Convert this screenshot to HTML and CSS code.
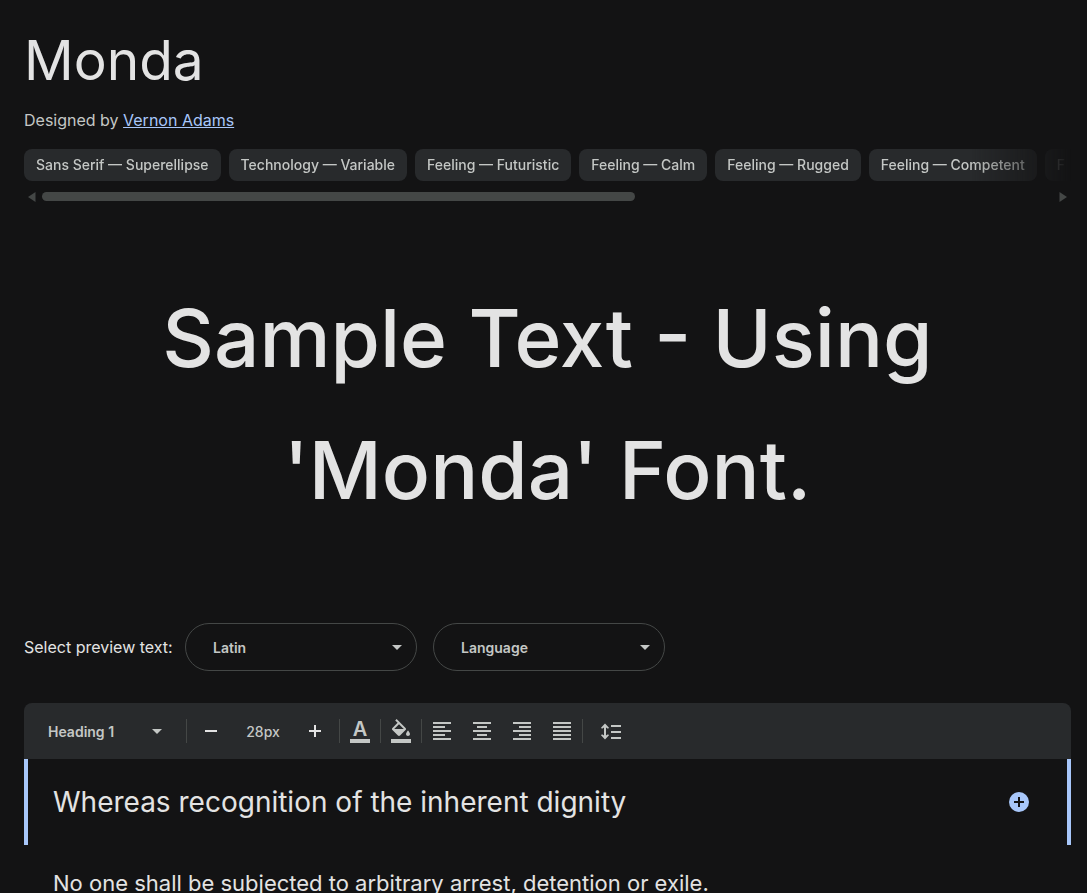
FILE: index.html
```html
<!DOCTYPE html>
<html lang="en">
<head>
  <meta charset="utf-8">
  <meta name="viewport" content="width=device-width, initial-scale=1">
  <title>Monda</title>
  <link rel="stylesheet" href="styles.css">
</head>
<body>
  <main class="page">
    <h1>Monda</h1>
    <p class="designer">Designed by <a href="#">Vernon Adams</a></p>

    <div class="tags">
      <a class="tag" href="#">Sans Serif — Superellipse</a>
      <a class="tag" href="#">Technology — Variable</a>
      <a class="tag" href="#">Feeling — Futuristic</a>
      <a class="tag" href="#">Feeling — Calm</a>
      <a class="tag" href="#">Feeling — Rugged</a>
      <a class="tag" href="#">Feeling — Competent</a>
      <a class="tag" href="#">F</a>
    </div>
    <div class="scrollbar">
      <svg class="scroll-arrow" viewBox="0 0 8 10"><path d="M7.500 0v10L0 5z"/></svg>
      <div class="scroll-track"><div class="scroll-thumb"></div></div>
      <svg class="scroll-arrow" viewBox="0 0 8 10"><path d="M.5 0v10L8 5z"/></svg>
    </div>

    <h2 class="sample">Sample Text - Using 'Monda' Font.</h2>

    <div class="preview">
      <label for="script">Select preview text:</label>
      <div class="select-wrap pill">
        <select id="script"><option>Latin</option></select>
        <svg class="caret" viewBox="0 0 10 5"><path d="M0 0h10L5 5z"/></svg>
      </div>
      <div class="select-wrap pill">
        <select aria-label="Language"><option>Language</option></select>
        <svg class="caret" viewBox="0 0 10 5"><path d="M0 0h10L5 5z"/></svg>
      </div>
    </div>

    <div class="toolbar">
      <div class="select-wrap style-select">
        <select aria-label="Text style"><option>Heading 1</option></select>
        <svg class="caret" viewBox="0 0 10 5"><path d="M0 0h10L5 5z"/></svg>
      </div>
      <div class="divider"></div>
      <button class="step-btn" aria-label="Decrease size"><svg viewBox="0 0 24 24"><path d="M6 11h12v2H6z"/></svg></button>
      <input class="size" type="text" value="28px" aria-label="Font size">
      <button class="step-btn" aria-label="Increase size"><svg viewBox="0 0 24 24"><path d="M11 6h2v5h5v2h-5v5h-2v-5H6v-2h5z"/></svg></button>
      <div class="divider"></div>
      <button class="tool-btn" aria-label="Text color"><span class="text-color">A</span></button>
      <div class="divider"></div>
      <button class="tool-btn" aria-label="Background color"><svg viewBox="0 0 24 24"><path d="M16.56 8.94L7.62 0 6.21 1.41l2.38 2.38-5.15 5.15c-.59.59-.59 1.54 0 2.12l5.5 5.5c.29.29.68.44 1.06.44s.77-.15 1.06-.44l5.5-5.5c.59-.58.59-1.53 0-2.12zM5.21 10L10 5.21 14.79 10H5.21zM19 11.5s-2 2.17-2 3.5c0 1.1.9 2 2 2s2-.9 2-2c0-1.33-2-3.5-2-3.5zM2 20h20v4H2z"/></svg></button>
      <div class="divider"></div>
      <button class="tool-btn" aria-label="Align left"><svg viewBox="0 0 24 24"><path d="M3 3h18v2H3zM3 7h12v2H3zM3 11h18v2H3zM3 15h12v2H3zM3 19h18v2H3z"/></svg></button>
      <button class="tool-btn" aria-label="Align center"><svg viewBox="0 0 24 24"><path d="M3 3h18v2H3zM7 7h10v2H7zM3 11h18v2H3zM7 15h10v2H7zM3 19h18v2H3z"/></svg></button>
      <button class="tool-btn" aria-label="Align right"><svg viewBox="0 0 24 24"><path d="M3 3h18v2H3zM9 7h12v2H9zM3 11h18v2H3zM9 15h12v2H9zM3 19h18v2H3z"/></svg></button>
      <button class="tool-btn" aria-label="Justify"><svg viewBox="0 0 24 24"><path d="M3 3h18v2H3zM3 7h18v2H3zM3 11h18v2H3zM3 15h18v2H3zM3 19h18v2H3z"/></svg></button>
      <div class="divider"></div>
      <button class="tool-btn wide" aria-label="Line height"><svg viewBox="0 0 24 24"><path d="M6 4.500l4 4.200-1 1-2-1.200v8l2-1.200 1 1-4 4.200-4-4.200 1-1 2 1.200v-8L3 9.700l-1-1zM12 6h10v2H12zM12 12h10v2H12zM12 18h10v2H12z"/></svg></button>
    </div>

    <div class="specimen active">
      <p class="heading-text">Whereas recognition of the inherent dignity</p>
      <button class="add-btn" aria-label="Add style"><svg viewBox="0 0 20 20"><circle cx="10" cy="10" r="10"/><path d="M9 5h2v4h4v2h-4v4H9v-4H5V9h4z"/></svg></button>
    </div>
    <div class="specimen">
      <p class="body-text">No one shall be subjected to arbitrary arrest, detention or exile.</p>
    </div>
  </main>
</body>
</html>
```
FILE: styles.css
```css
* {
  box-sizing: border-box;
}
body {
  margin: 0;
  background-color: #131314;
  color: #e3e3e3;
  font-family: "Inter", sans-serif;
}
.page {
  height: 100vh;
  overflow: hidden;
  padding: 28px 16px 0 24px;
}
h1, h2, p {
  margin: 0;
  font-weight: 400;
}
h1 {
  font-size: 55px;
  line-height: 64px;
}
.designer {
  margin-top: 16px;
  font-size: 16px;
  line-height: 24px;
  color: #c4c7c5;
}
.designer a {
  color: #a8c7fa;
}
.tags {
  display: flex;
  gap: 8px;
  margin-top: 17px;
  overflow: hidden;
  -webkit-mask-image: linear-gradient(to right, #000 calc(100% - 100px), transparent);
  mask-image: linear-gradient(to right, #000 calc(100% - 100px), transparent);
}
.tag {
  flex: none;
  padding: 0 12px;
  border-radius: 8px;
  background-color: #282a2c;
  color: #c4c7c5;
  font-size: 14px;
  font-weight: 500;
  line-height: 32px;
  text-decoration: none;
}
.scrollbar {
  display: flex;
  align-items: center;
  gap: 6px;
  height: 15px;
  margin-top: 8px;
  padding: 0 4px;
}
.scroll-arrow {
  width: 8px;
  height: 10px;
  fill: #444746;
}
.scroll-track {
  flex: 1;
}
.scroll-thumb {
  width: 58.7%;
  height: 9px;
  border-radius: 5px;
  background-color: #444746;
}
.sample {
  margin-top: 68px;
  font-size: 80px;
  font-weight: 500;
  line-height: 132px;
  text-align: center;
}
.preview {
  display: flex;
  align-items: center;
  gap: 16px;
  margin-top: 87px;
  font-size: 16px;
}
.preview label {
  width: 145px;
  white-space: nowrap;
}
.select-wrap {
  position: relative;
  display: flex;
}
.select-wrap select {
  width: 100%;
  border: none;
  background: none;
  color: #c4c7c5;
  font-family: inherit;
  font-size: 14px;
  font-weight: 600;
  appearance: none;
}
.caret {
  position: absolute;
  top: 50%;
  right: 15px;
  width: 10px;
  height: 5px;
  margin-top: -2px;
  fill: #c4c7c5;
  pointer-events: none;
}
.pill select {
  width: 232px;
  height: 48px;
  padding: 0 27px;
  border: 1px solid #444746;
  border-radius: 24px;
}
.toolbar {
  display: flex;
  align-items: center;
  height: 56px;
  margin-top: 32px;
  border-radius: 8px 8px 0 0;
  background-color: #282a2c;
}
.style-select {
  width: 162px;
}
.style-select select {
  height: 40px;
  padding: 0 24px;
}
.style-select .caret {
  right: 24px;
}
.divider {
  width: 1px;
  height: 24px;
  background-color: #444746;
}
button {
  display: flex;
  align-items: center;
  justify-content: center;
  padding: 0;
  border: none;
  background: none;
  color: #c4c7c5;
  font-family: inherit;
  cursor: pointer;
}
.toolbar svg {
  fill: #c4c7c5;
}
.toolbar button svg {
  width: 24px;
  height: 24px;
}
.toolbar .step-btn svg {
  fill: #e3e3e3;
}
.step-btn {
  width: 48px;
  height: 48px;
}
.tool-btn {
  width: 40px;
  height: 40px;
}
.wide {
  width: 56px;
}
.size {
  width: 56px;
  padding: 0;
  border: none;
  background: none;
  color: #c4c7c5;
  font-family: inherit;
  font-size: 14px;
  font-weight: 500;
  text-align: center;
}
.text-color {
  width: 20px;
  height: 24px;
  border-bottom: 4px solid #c4c7c5;
  font-size: 20px;
  font-weight: 600;
  line-height: 20px;
}
.specimen {
  display: flex;
  align-items: center;
  justify-content: space-between;
  padding: 22px 38px 22px 25px;
  border: solid transparent;
  border-width: 0 4px;
}
.active {
  border-color: #a8c7fa;
}
.heading-text {
  font-size: 28px;
  line-height: 42px;
}
.body-text {
  font-size: 22px;
  line-height: 32px;
}
.add-btn svg {
  width: 20px;
  height: 20px;
  fill: #a8c7fa;
}
.add-btn path {
  fill: #131314;
}
```
